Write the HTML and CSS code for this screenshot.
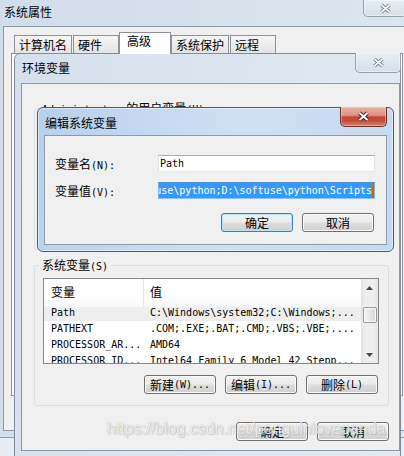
FILE: index.html
```html
<!DOCTYPE html>
<html lang="zh-CN">
<head>
<meta charset="utf-8">
<title>编辑系统变量</title>
<link rel="stylesheet" href="styles.css">
</head>
<body>
<div class="desk">

  <section class="win win-sys">
    <header class="titlebar">
      <span class="title">系统属性</span>
      <span class="close close-idle">
        <svg width="13" height="11" viewBox="0 0 13 11"><path d="M2.5 2 L10.5 9 M10.5 2 L2.5 9" stroke="#66717e" stroke-width="3.6"/><path d="M2.5 2 L10.5 9 M10.5 2 L2.5 9" stroke="#ffffff" stroke-width="1.7"/></svg>
      </span>
    </header>
    <div class="client client-sys">
      <nav class="tabs">
        <span class="tab">计算机名</span>
        <span class="tab">硬件</span>
        <span class="tab tab-on">高级</span>
        <span class="tab">系统保护</span>
        <span class="tab">远程</span>
      </nav>
      <div class="tabpage"></div>
    </div>
  </section>

  <section class="win win-env">
    <header class="titlebar">
      <span class="title">环境变量</span>
      <span class="close close-idle">
        <svg width="13" height="11" viewBox="0 0 13 11"><path d="M2.5 2 L10.5 9 M10.5 2 L2.5 9" stroke="#66717e" stroke-width="3.6"/><path d="M2.5 2 L10.5 9 M10.5 2 L2.5 9" stroke="#ffffff" stroke-width="1.7"/></svg>
      </span>
    </header>
    <div class="client client-env">
      <fieldset class="group group-user">
        <legend><span class="m">Administrator </span>的用户变量<span class="m">(U)</span></legend>
      </fieldset>
      <fieldset class="group group-sys">
        <legend>系统变量<span class="m">(S)</span></legend>
        <div class="list">
          <div class="list-main">
            <div class="list-head"><span class="h1">变量</span><span class="h2">值</span></div>
            <div class="row sel"><span class="c1">Path</span><span class="c2">C:\Windows\system32;C:\Windows;...</span></div>
            <div class="row"><span class="c1">PATHEXT</span><span class="c2">.COM;.EXE;.BAT;.CMD;.VBS;.VBE;....</span></div>
            <div class="row"><span class="c1">PROCESSOR_AR...</span><span class="c2">AMD64</span></div>
            <div class="row"><span class="c1">PROCESSOR_ID...</span><span class="c2">Intel64 Family 6 Model 42 Stepp...</span></div>
          </div>
          <div class="vscroll">
            <span class="arrow"><svg width="7" height="4" viewBox="0 0 7 4"><path d="M0 4 L3.5 0 L7 4 Z" fill="#4a4a4a"/></svg></span>
            <span class="thumb"></span>
            <span class="track-rest"></span>
            <span class="arrow"><svg width="7" height="4" viewBox="0 0 7 4"><path d="M0 0 L3.5 4 L7 0 Z" fill="#4a4a4a"/></svg></span>
          </div>
        </div>
        <div class="btnrow btnrow-group">
          <span class="btn">新建<span class="m">(W)...</span></span>
          <span class="btn">编辑<span class="m">(I)...</span></span>
          <span class="btn">删除<span class="m">(L)</span></span>
        </div>
      </fieldset>
      <div class="btnrow btnrow-dlg">
        <span class="btn">确定</span>
        <span class="btn">取消</span>
      </div>
    </div>
  </section>

  <section class="win win-edit">
    <header class="titlebar">
      <span class="title">编辑系统变量</span>
      <span class="close close-hot">
        <svg width="13" height="11" viewBox="0 0 13 11"><path d="M2.5 2 L10.5 9 M10.5 2 L2.5 9" stroke="#47201d" stroke-width="3.8"/><path d="M2.5 2 L10.5 9 M10.5 2 L2.5 9" stroke="#ffffff" stroke-width="1.9"/></svg>
      </span>
    </header>
    <div class="client client-edit">
      <div class="form">
        <span class="label">变量名<span class="m">(N):</span></span>
        <div class="field"><span class="val">Path</span></div>
        <span class="label">变量值<span class="m">(V):</span></span>
        <div class="field field-focus"><span class="seltext">D:\softuse\python;D:\softuse\python\Scripts</span><span class="caret"></span></div>
      </div>
      <div class="btnrow btnrow-edit">
        <span class="btn btn-default">确定</span>
        <span class="btn">取消</span>
      </div>
    </div>
  </section>

  <div class="watermark">https://blog.csdn.net/penguinlovepanda</div>
</div>
</body>
</html>
```

FILE: styles.css
```css
* { box-sizing: border-box; }
html, body { margin: 0; padding: 0; }
body {
  width: 404px; height: 456px; overflow: hidden;
  background: #e8edf3;
  font-family: "Noto Sans CJK SC", sans-serif;
  font-size: 12px; color: #000;
}
.desk { position: relative; width: 404px; height: 456px; overflow: hidden; }
.m { font-family: "DejaVu Sans Mono", monospace; font-size: 10px; line-height: 10px; }

/* windows */
.win { position: absolute; display: flex; flex-direction: column; }
.titlebar { display: flex; align-items: flex-start; flex: none; }
.title { line-height: 14px; white-space: nowrap; }
.close { margin-left: auto; flex: none; display: flex; align-items: center; justify-content: center; }
.close-idle {
  background: linear-gradient(#e6edf5, #d6dfea);
  border: 1px solid #95a1ae; border-top: 0;
  border-radius: 0 0 5px 5px;
  box-shadow: inset 0 0 0 1px rgba(255,255,255,.45);
}
.close-hot {
  background: linear-gradient(#eab0a6 0%, #dd9283 44%, #c4493b 52%, #c24a39 72%, #d9816c 100%);
  border: 1px solid #6b302b; border-top: 0;
  border-radius: 0 0 5px 5px;
  box-shadow: inset 0 0 0 1px rgba(255,215,205,.45);
}
.client { background: #f0f0f0; border: 1px solid #8b99a9; }

/* 系统属性 */
.win-sys {
  left: 0; top: 0; width: 413px; height: 438px;
  padding: 0 0 6px 3px;
  border-bottom: 1px solid #8f9cab;
  background: linear-gradient(100deg, #d2ddea, #dfe7f0);
}
.win-sys .titlebar { height: 26px; }
.win-sys .title { padding: 5px 0 0 1px; }
.win-sys .close { width: 44px; height: 17px; margin-right: 6px; }
.client-sys { flex: 1; display: flex; flex-direction: column; }
.tabs {
  display: flex; align-items: flex-end; gap: 1px;
  padding: 5px 0 0 10px; z-index: 1;
}
.tab {
  height: 18px; min-width: 46px;
  padding: 1px 4px 0 4px; line-height: 15px;
  border: 1px solid #8e9199; border-bottom: 0;
  background: linear-gradient(#f5f5f5, #e4e4e4);
  white-space: nowrap;
}
.tab-on {
  height: 22px; min-width: 52px;
  padding: 0 6px 0 7px; line-height: 16px;
  margin: 0 -1px -1px;
  background: #fff;
}
.tabpage {
  height: 343px; margin: 0 9px 0 7px;
  border: 1px solid #8e9199; background: #fff;
}

/* 环境变量 */
.win-env {
  left: 14px; top: 53px; width: 387px; height: 405px;
  border: 1px solid #7f8c9b; border-radius: 6px 6px 0 0;
  padding: 0 0 6px 6px;
  background: linear-gradient(100deg, #d6e0ec, #e3eaf2);
}
.win-env .titlebar { height: 29px; }
.win-env .title { padding: 7px 0 0 1px; }
.win-env .close { width: 46px; height: 20px; margin: -1px -1px 0 auto; }
.client-env { flex: 1; padding: 17px 10px 0 12px; }

.group {
  margin: 0; min-width: 0;
  border: 1px solid #d5dfe5; border-radius: 3px;
  padding: 6px 9px 11px 8px;
}
.group legend { padding: 0 3px; margin-left: -4px; line-height: 14px; white-space: nowrap; }
.group-user { height: 149px; }
.group-sys { height: 148px; margin-top: 8px; }

.list { display: flex; height: 86px; border: 1px solid #828790; background: #fff; }
.list-main { flex: 1; min-width: 0; overflow: hidden; }
.list-head {
  display: flex; height: 28px; line-height: 25px;
  background: linear-gradient(#ffffff, #ffffff 55%, #f7f8f9);
}
.h1 { width: 100px; padding-left: 7px; border-right: 1px solid #e3e5e8; }
.h2 { padding-left: 6px; }
.row {
  display: flex; height: 16px; line-height: 12px; white-space: nowrap;
  font-family: "DejaVu Sans Mono", monospace; font-size: 10px;
}
.row.sel { background: linear-gradient(#efefef, #ededed) 0 0 / 100% 14px no-repeat; }
.c1 { width: 100px; padding-left: 7px; overflow: hidden; flex: none; }
.c2 { padding-left: 6px; overflow: hidden; }

.vscroll {
  width: 17px; flex: none; display: flex; flex-direction: column; align-items: center;
  background: linear-gradient(90deg, #e2e2e2, #eeeeee 25%, #efefef 75%, #e4e4e4);
}
.arrow { height: 17px; width: 17px; display: flex; align-items: center; justify-content: center; flex: none; }
.thumb {
  width: 14px; height: 16px; margin-top: 11px; flex: none;
  border: 1px solid #989898; border-radius: 2px;
  background: linear-gradient(90deg, #f3f3f3, #e6e6e6 50%, #d6d6d6);
  box-shadow: inset 0 0 0 1px #fbfbfb;
}
.track-rest { flex: 1; }

.btnrow { display: flex; justify-content: flex-end; gap: 9px; }
.btnrow-group { margin-top: 11px; padding-right: 1px; }
.btnrow-dlg { margin-top: 16px; }
.btn {
  width: 72px; height: 19px; flex: none;
  display: flex; align-items: center; justify-content: center;
  line-height: 17px; white-space: nowrap;
  border: 1px solid #707070; border-radius: 3px;
  background: linear-gradient(#f3f3f3, #ebebeb 48%, #dddddd 52%, #d0d0d0);
  box-shadow: inset 0 0 0 1px #fbfbfb;
}
.btn-default {
  border-color: #3c7fb1;
  box-shadow: inset 0 0 0 1px #b9e2f8;
}

/* 编辑系统变量 */
.win-edit {
  left: 37px; top: 107px; width: 357px; height: 145px;
  border: 1px solid #4a5a6b; border-radius: 6px;
  padding: 0 6px 6px;
  background: linear-gradient(100deg, #b8d0ea, #cfe0f3 55%, #c4d9ef);
  box-shadow: inset 0 0 0 1px rgba(255,255,255,.5);
}
.win-edit .titlebar { height: 27px; }
.win-edit .title { padding: 8px 0 0 1px; }
.win-edit .close { width: 47px; height: 20px; margin-top: -1px; }
.client-edit { flex: 1; padding: 19px 11px 0 10px; }
.form { display: grid; grid-template-columns: 103px 217px; row-gap: 10px; }
.label { line-height: 17px; white-space: nowrap; }
.field {
  height: 17px; display: flex; overflow: hidden; white-space: nowrap;
  border: 1px solid; border-color: #abadb3 #e2e3ea #e3e9ef #e2e3ea;
  background: #fff;
  font-family: "DejaVu Sans Mono", monospace; font-size: 10px; line-height: 15px;
}
.val { padding-left: 1px; }
.field-focus { justify-content: flex-end; border-color: #4b8fd0 #80b6ea #8fc1ee #80b6ea; }
.seltext { flex: none; background: #3399ff; color: #fff; }
.caret { flex: none; width: 2px; background: #cc6600; }
.btnrow-edit { margin-top: 14px; padding-right: 1px; }

.watermark {
  position: absolute; left: 107px; top: 420px;
  font-family: "Liberation Sans", sans-serif; font-size: 16px; line-height: 18px;
  color: rgba(255,255,255,.8);
  text-shadow: 0 0 1px rgba(110,110,110,.55), 1px 1px 1px rgba(150,150,150,.35);
  white-space: nowrap;
}
```
